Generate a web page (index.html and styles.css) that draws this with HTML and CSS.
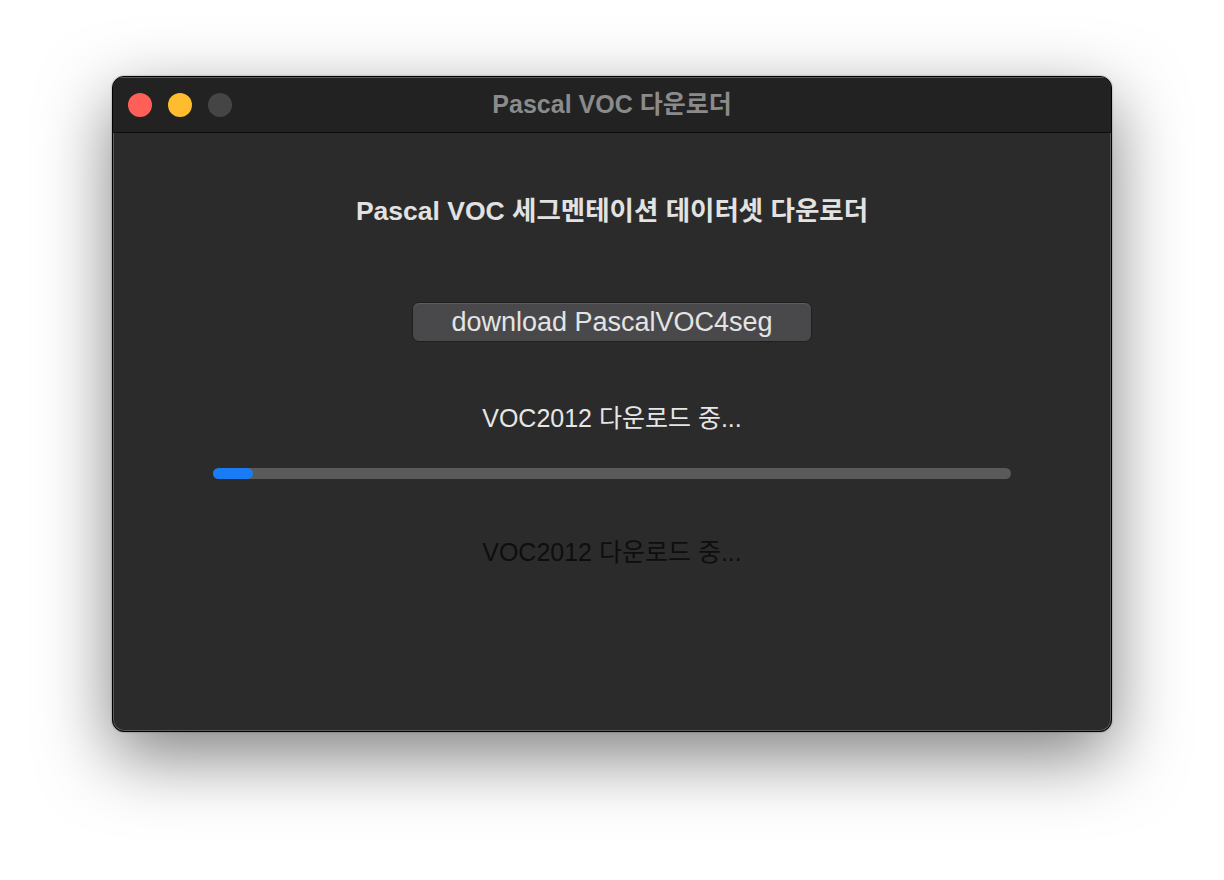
FILE: index.html
```html
<!DOCTYPE html>
<html lang="ko">
<head>
<meta charset="utf-8">
<link rel="stylesheet" href="styles.css">
</head>
<body>
<div class="stage">
  <div class="window">
    <div class="titlebar">
      <div class="lights">
        <span class="light red"></span>
        <span class="light yellow"></span>
        <span class="light gray"></span>
      </div>
      <div class="title">Pascal VOC 다운로더</div>
    </div>
    <div class="content">
      <h1 class="heading">Pascal VOC 세그멘테이션 데이터셋 다운로더</h1>
      <button class="btn">download PascalVOC4seg</button>
      <div class="status">VOC2012 다운로드 중...</div>
      <div class="progress"><div class="fill" style="width:5%"></div></div>
      <div class="status dark">VOC2012 다운로드 중...</div>
    </div>
  </div>
</div>
</body>
</html>
```
FILE: styles.css
```css
html, body {
  margin: 0;
  padding: 0;
  background: #ffffff;
}
body {
  width: 1224px;
  height: 880px;
  overflow: hidden;
  font-family: "Liberation Sans", Arial, "Noto Sans CJK KR", sans-serif;
}
.stage {
  padding-top: 76px;
  padding-left: 112px;
}
.window {
  width: 1000px;
  height: 656px;
  box-sizing: border-box;
  border-radius: 12px;
  background: #2b2b2b;
  border: 1px solid #000;
  box-shadow: inset 0 0 0 1px #5a5a5a, 0 24px 70px rgba(0,0,0,0.5), 0 0 2px rgba(0,0,0,0.4);
  overflow: hidden;
  display: flex;
  flex-direction: column;
}
.titlebar {
  height: 56px;
  flex: none;
  background: #222222;
  border-bottom: 1px solid #0c0c0c;
  box-shadow: inset 0 1px 0 #5a5a5a;
  display: flex;
  align-items: center;
  position: relative;
  box-sizing: border-box;
}
.lights {
  display: flex;
  gap: 16px;
  padding-left: 15px;
  padding-top: 1px;
}
.light {
  width: 24px;
  height: 24px;
  border-radius: 50%;
  display: block;
}
.red { background: #fe5f57; }
.yellow { background: #febc2e; }
.gray { background: #454545; }
.title {
  position: absolute;
  left: 0;
  right: 0;
  top: 0;
  bottom: 0;
  display: flex;
  align-items: center;
  justify-content: center;
  color: #8b8b8b;
  font-weight: bold;
  font-size: 25px;
  padding-bottom: 5px;
  pointer-events: none;
}
.content {
  flex: 1;
  display: flex;
  flex-direction: column;
  align-items: center;
}
.heading {
  margin: 62px 0 0;
  font-size: 26.5px;
  font-weight: bold;
  color: #e2e2e2;
  line-height: 32px;
}
.btn {
  margin-top: 75px;
  width: 400px;
  height: 40px;
  border-radius: 7px;
  background: #49494b;
  border: 1px solid #1f1f1f;
  box-shadow: inset 0 1px 0 #5d5d5f;
  color: #e4e4e4;
  font-family: "Liberation Sans", Arial, "Noto Sans CJK KR", sans-serif;
  font-size: 27px;
  padding: 0;
}
.status {
  margin-top: 60px;
  font-size: 25px;
  color: #e6e6e6;
  line-height: 32px;
}
.status.dark {
  margin-top: 57px;
  color: #0e0e0e;
}
.progress {
  margin-top: 34px;
  width: 798px;
  height: 11px;
  border-radius: 6px;
  background: #5a5a5a;
  overflow: hidden;
}
.fill {
  height: 100%;
  border-radius: 6px;
  background: #1a7cf5;
}
```
